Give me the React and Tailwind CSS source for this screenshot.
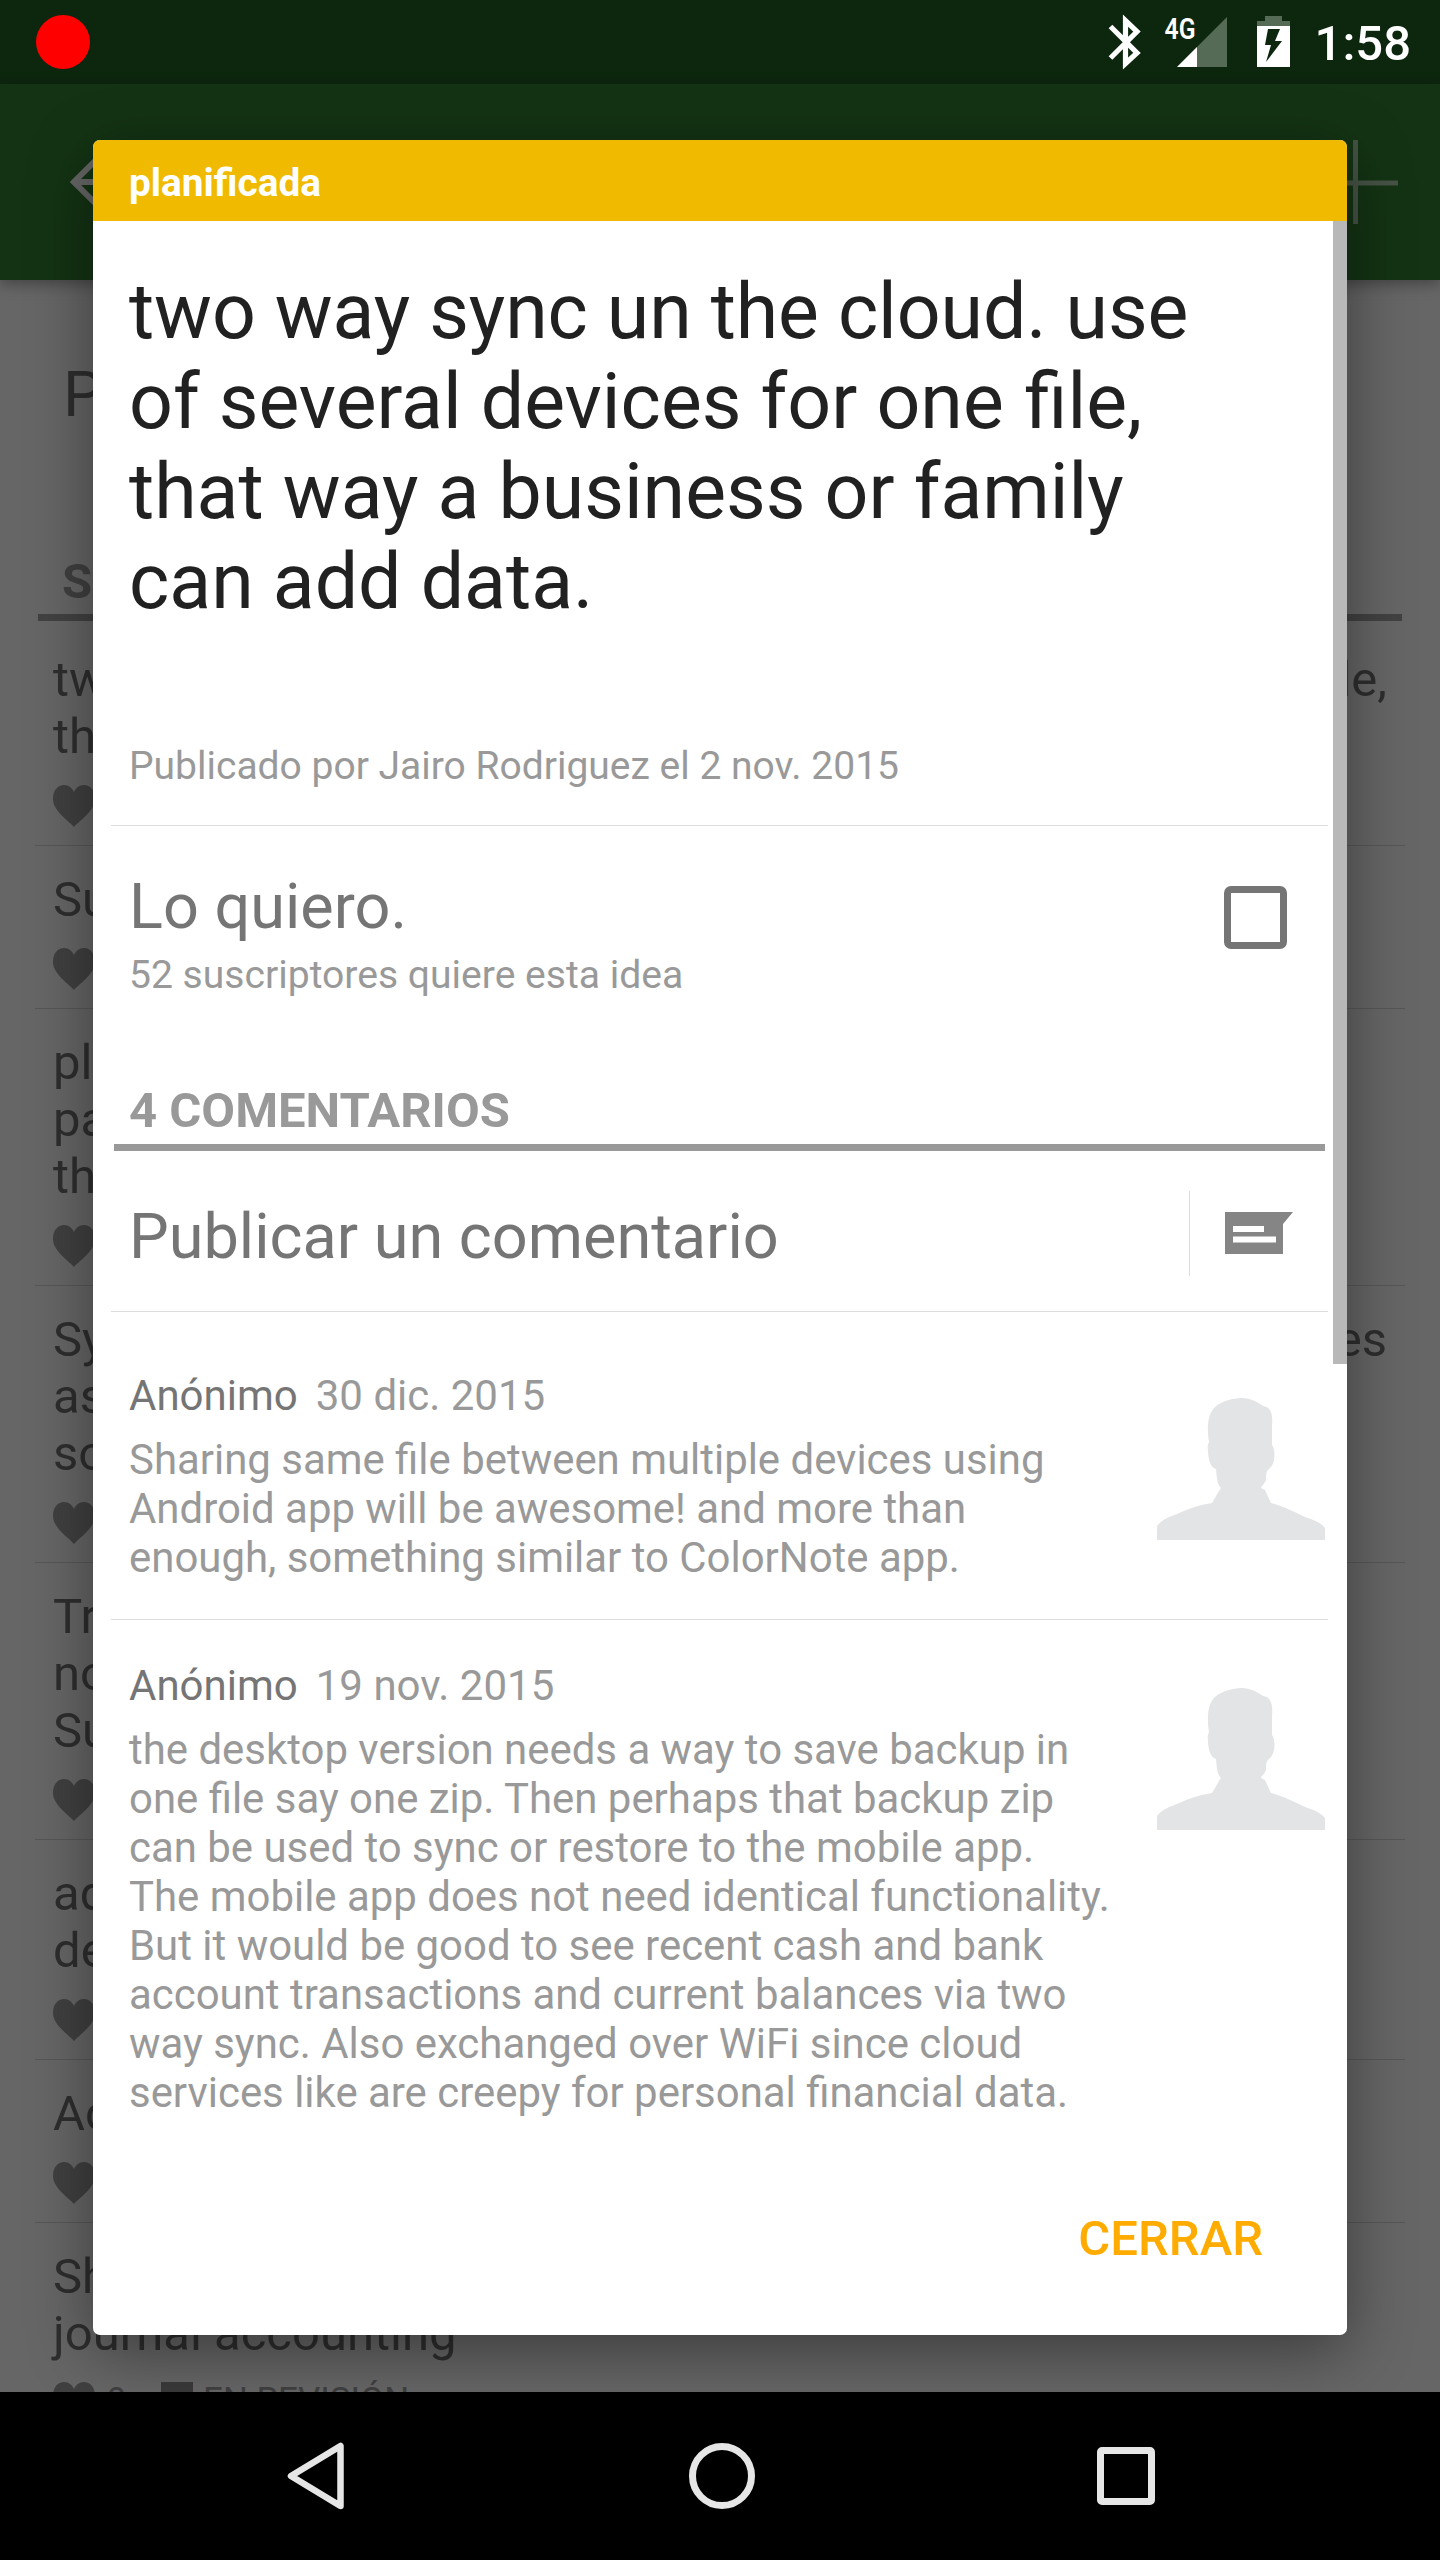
const Heart = () => (
  <svg className="block h-[42px] w-[42px] shrink-0" viewBox="0 0 42 42" fill="#404040">
    <path d="M21 42C16 36 0 26 0 14C0 5 5 0 11 0C16 0 19 3 21 7C23 3 26 0 31 0C37 0 42 5 42 14C42 26 26 36 21 42Z" />
  </svg>
);

const Person = () => (
  <svg className="block h-[168px] w-[168px]" viewBox="0 0 168 168" fill="#e2e4e6">
    <path d="M0 168V154Q5 147 20 142Q36 134 55 131L62 119L64 116C60 112 60 107 59 97C54 96 51 88 51 78Q50 74 52 70C50 58 50 42 58 35C66 28 78 26 86 26C96 27 102 31 106 34C114 35 116 42 115 54L115 73C119 78 118 92 113 96C109 99 109 102 109 108C107 113 104 114 104 116L108 118L114 131Q124 133 148 145Q164 150 168 156V168Z" />
  </svg>
);

const ideas = [
  { lines: ["tw", "th"], right: "le,", h: "h-[220px]" },
  { lines: ["Su"], h: "h-[163px]" },
  { lines: ["pl", "pa", "th"], h: "h-[277px]" },
  { lines: ["Sy", "as", "so"], right: "es", h: "h-[277px]" },
  { lines: ["Tr", "no", "Su"], h: "h-[277px]" },
  { lines: ["ad", "de"], h: "h-[220px]" },
  { lines: ["Ac"], h: "h-[163px]" },
  { lines: ["Sh", "journal accounting"], h: "h-[220px]", last: true },
];

const comments = [
  {
    date: "30 dic. 2015",
    box: "h-[308px] pt-[60px] border-b border-[#dddddd]",
    lines: ["Sharing same file between multiple devices using", "Android app will be awesome! and more than", "enough, something similar to ColorNote app."],
  },
  {
    date: "19 nov. 2015",
    box: "h-[500px] pt-[42px]",
    lines: [
      "the desktop version needs a way to save backup in",
      "one file say one zip. Then perhaps that backup zip",
      "can be used to sync or restore to the mobile app.",
      "The mobile app does not need identical functionality.",
      "But it would be good to see recent cash and bank",
      "account transactions and current balances via two",
      "way sync. Also exchanged over WiFi since cloud",
      "services like are creepy for personal financial data.",
    ],
  },
];

export default function App() {
  return (
    <div className="relative flex h-[2560px] w-[1440px] flex-col overflow-hidden bg-[#666666] font-[Roboto,sans-serif] whitespace-nowrap">
      <header className="flex h-[84px] shrink-0 items-center justify-between bg-[#0d260e] pr-[29px] pl-9 text-white">
        <span className="h-[54px] w-[54px] rounded-full bg-[#ff0000]" />
        <svg className="ml-auto block h-[84px] w-[204px]" viewBox="1100 0 204 84">
          <path d="M1110.500 26.500L1137 53L1125.500 63.500V20.500L1137 31.500L1110.500 58" fill="none" stroke="#fff" strokeWidth="5.200" />
          <text x="1164.500" y="39" fontSize="29" fontWeight="600" fill="#fff" textLength="31" lengthAdjust="spacingAndGlyphs">4G</text>
          <path d="M1227 17V67H1177Z" fill="#566b56" />
          <path d="M1197 47V67H1177Z" fill="#fff" />
          <path d="M1257 26V21H1265V16H1282V21H1290V26Z" fill="#566b56" />
          <path d="M1257 26H1290V67H1257Z" fill="#fff" />
          <path d="M1268 29H1280L1275 41H1282L1266 62L1271 45H1265Z" fill="#0d260e" />
        </svg>
        <span className="ml-[11px] pt-[2px] text-[49px] leading-none font-medium">1:58</span>
      </header>

      <div className="z-10 flex h-[196px] shrink-0 items-center justify-between bg-[#143314] pr-[42px] pl-[70px] shadow-[0_4px_14px_rgba(0,0,0,0.35)]">
        <svg className="block h-14 w-14" viewBox="0 0 56 56" fill="none" stroke="#666666" strokeWidth="6">
          <path d="M28 4L4 28L28 52M4 28H56" />
        </svg>
        <svg className="block h-[84px] w-[84px]" viewBox="0 0 84 84" fill="none" stroke="#465346" strokeWidth="5">
          <path d="M0 43H84M41.500 0V84" />
        </svg>
      </div>

      <main className="flex h-[2112px] shrink-0 flex-col overflow-hidden text-[#2e2e2e]">
        <div className="flex h-[230px] shrink-0 items-center px-[63px] text-[63px]">P</div>
        <div className="mx-[38px] flex h-[111px] shrink-0 items-end border-b-[7px] border-[#424242] px-6 pb-1 text-[49px] leading-[57px] font-bold text-[#404040]">S</div>
        <div className="flex flex-col px-[35px] pt-[5px]">
          {ideas.map((idea, i) => (
            <div key={i} className={`flex shrink-0 flex-col border-b border-[#575757] px-[18px] pt-[25px] text-[49px] leading-[57px] ${idea.h}`}>
              {idea.lines.map((l, j) => (
                <div key={j} className="flex justify-between">
                  <span>{l}</span>
                  {j === 0 && idea.right ? <span>{idea.right}</span> : null}
                </div>
              ))}
              <div className="mt-[20px] flex items-start gap-3 text-[#404040]">
                <Heart />
                {idea.last ? (
                  <div className="flex text-[35px] leading-[38px]">
                    <span className="w-[54px]">9</span>
                    <span className="mr-[10px] h-8 w-8 bg-[#3a3a3a]" />
                    <span>EN REVISIÓN</span>
                  </div>
                ) : null}
              </div>
            </div>
          ))}
        </div>
      </main>

      <section className="absolute top-[140px] left-[93px] z-20 flex h-[2195px] w-[1254px] flex-col overflow-hidden rounded-[7px] bg-white text-[#999999] shadow-[0_16px_64px_rgba(0,0,0,0.42)]">
        <h1 className="flex h-[81px] shrink-0 items-center bg-[#f0ba00] px-9 pt-1 text-[38.800px] leading-[49px] font-bold text-white">planificada</h1>
        <div className="flex h-[1904px] shrink-0">
          <div className="flex w-[1240px] flex-col pr-[5px] pl-[18px]">
            <div className="flex h-[605px] shrink-0 flex-col justify-between border-b border-[#dddddd] px-[18px] pt-[46px] pb-[34px]">
              <p className="text-[77px] leading-[90px] text-[#212121]">
                <span className="tracking-[-0.080px]">two way sync un the cloud. use</span><br />of several devices for one <span className="ml-[2px]">file,</span><br />that way a business or family<br />can add data.
              </p>
              <p className="text-[39px] leading-[49px]">Publicado por Jairo Rodriguez el 2 nov. 2015</p>
            </div>
            <div className="flex h-[243px] shrink-0 items-start justify-between pt-[44px] pr-[41px] pl-[18px]">
              <div>
                <p className="text-[63px] leading-[74px] text-[#757575]">Lo quiero.</p>
                <p className="mt-[8px] text-[39.100px] leading-[47px]">52 suscriptores quiere esta idea</p>
              </div>
              <span className="mt-[16px] h-[63px] w-[63px] rounded-[7px] border-[7px] border-[#757575]" />
            </div>
            <h2 className="mr-[3px] ml-[3px] flex h-[82px] shrink-0 items-end border-b-[7px] border-[#999999] px-[15px] pb-[5px] text-[49px] leading-[57px] font-bold">4 COMENTARIOS</h2>
            <div className="flex h-[161px] shrink-0 items-center justify-between border-b border-[#dddddd] pr-[35px] pl-[18px]">
              <p className="pt-[11px] text-[63px] leading-[74px] text-[#757575]">Publicar un comentario</p>
              <div className="flex items-center pt-[4px]">
                <span className="mr-[35px] h-[85px] w-px bg-[#dddddd]" />
                <svg className="block h-[42px] w-[68px]" viewBox="0 0 68 42">
                  <path d="M0 0H68L58 12V42H0Z" fill="#858585" />
                  <path d="M8 14H39V20H8ZM8 24.500H51V30.500H8Z" fill="#fff" />
                </svg>
              </div>
            </div>
            {comments.map((c) => (
              <article key={c.date} className={`flex shrink-0 items-start justify-between pr-[3px] pl-[18px] ${c.box}`}>
                <div className="-mt-px">
                  <p className="mb-[15px] flex gap-[18px] text-[42px] leading-[49px]">
                    <span className="text-[#757575]">Anónimo</span>
                    <span>{c.date}</span>
                  </p>
                  <p className="text-[41.930px] leading-[49px]">
                    {c.lines.map((l) => (
                      <span key={l} className="block">{l}</span>
                    ))}
                  </p>
                </div>
                <Person />
              </article>
            ))}
          </div>
          <div className="h-[1143px] w-[14px] bg-[#b8b8b8]" />
        </div>
        <div className="flex flex-1 items-start justify-end pt-[85px] pr-[84px] text-[49px] leading-[57px] font-medium text-[#ffab00]">CERRAR</div>
      </section>

      <nav className="flex h-[168px] shrink-0 items-center justify-between bg-black pr-[285px] pl-[286px]">
        <svg className="block h-[70px] w-[60px]" viewBox="0 0 60 70" fill="none" stroke="#e6e6e6" strokeWidth="6.500" strokeLinejoin="round">
          <path d="M54.500 5V65L5 35Z" />
        </svg>
        <span className="h-[66px] w-[66px] rounded-full border-[7px] border-[#e6e6e6]" />
        <span className="h-[58px] w-[58px] rounded-[5px] border-[7px] border-[#e6e6e6]" />
      </nav>
    </div>
  );
}
